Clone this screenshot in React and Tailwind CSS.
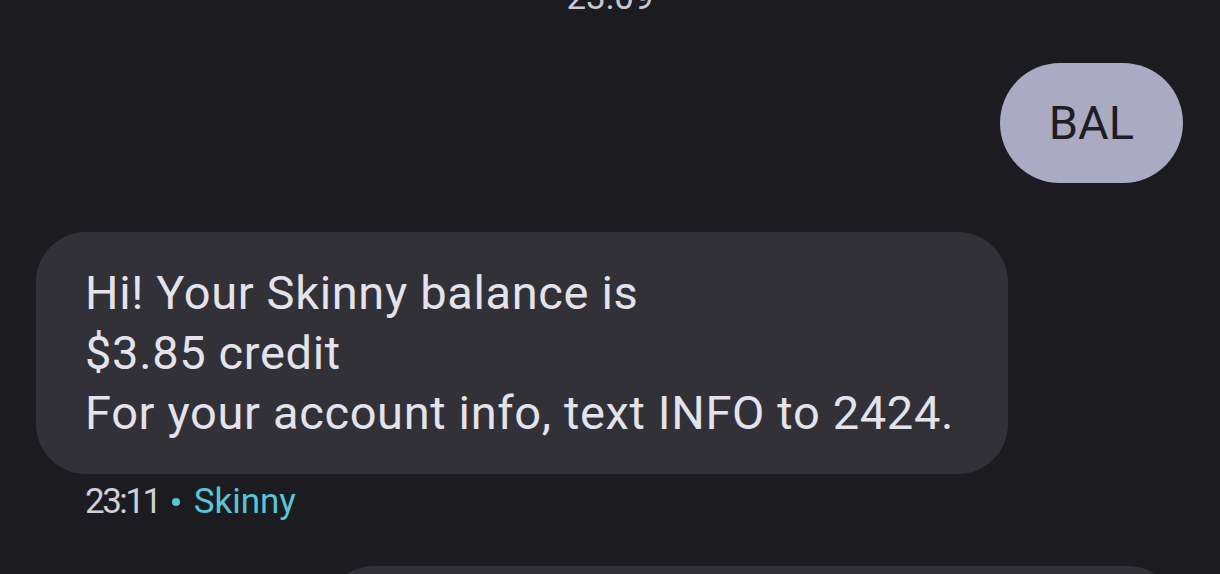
export default function App() {
  const font = { fontFamily: 'Roboto, "Noto Sans", sans-serif' };
  return (
    <div
      className="w-[1220px] h-[574px] bg-[#1c1b20] overflow-hidden flex flex-col"
      style={font}
    >
      <div className="mt-[-22px] text-center text-[35px] leading-[40px] text-[#c9c7d0]">
        23:09
      </div>
      <div className="flex justify-end pr-[37px] mt-[45px]">
        <div className="h-[120px] px-[49px] rounded-full bg-[#aaaac2] flex items-center text-[47px] text-[#1e1d24]">
          BAL
        </div>
      </div>
      <div className="ml-[36px] mt-[49px] w-[972px] rounded-[50px] bg-[#323137] px-[49px] py-[31px] text-[47px] leading-[60px] tracking-[0.65px] text-[#e4e2ea]">
        <div>Hi! Your Skinny balance is</div>
        <div>$3.85 credit</div>
        <div>For your account info, text INFO to 2424.</div>
      </div>
      <div className="ml-[85px] mt-[8px] flex items-center text-[35px] leading-[40px]">
        <span className="text-[#d0ced6] tracking-[-2.5px]">23:11</span>
        <span className="ml-[12px] mr-[14px] w-[8px] h-[8px] rounded-full bg-[#58c6d6]" />
        <span className="text-[#58c6d6]">Skinny</span>
      </div>
      <div className="ml-[324px] mr-[42px] mt-[44px] h-[120px] shrink-0 rounded-[50px] bg-[#323137]" />
    </div>
  );
}
